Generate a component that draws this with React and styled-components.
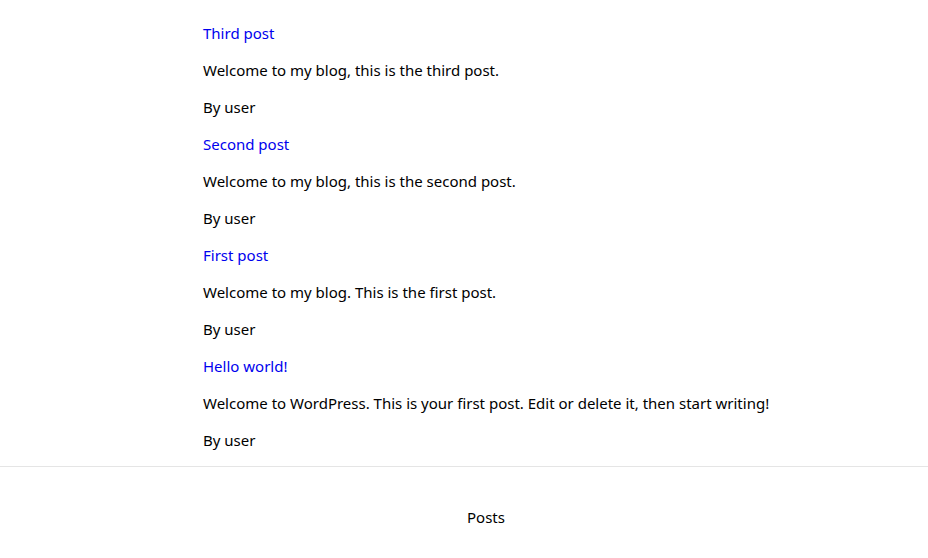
import React from "react";
import styled, { createGlobalStyle } from "styled-components";

const Global = createGlobalStyle`
  html, body { margin: 0; padding: 0; background: #fff; }
  body {
    font-family: "Noto Sans", "Open Sans", sans-serif;
    font-size: 15px;
    color: #000;
  }
`;

const Main = styled.main`
  padding: 7px 0 0 203px;
`;

const Post = styled.article``;

const Para = styled.p`
  margin: 16px 0;
  line-height: 21px;
  white-space: nowrap;
`;

const TitleLink = styled.a`
  color: #0000ee;
  text-decoration: none;
`;

const Footer = styled.footer`
  margin-top: -1px;
  border-top: 1px solid #e5e5e5;
  display: flex;
  justify-content: center;
  padding: 40px 0 0 44px;
`;

const FooterLink = styled.span`
  line-height: 21px;
`;

const posts = [
  { title: "Third post", body: "Welcome to my blog, this is the third post." },
  { title: "Second post", body: "Welcome to my blog, this is the second post." },
  { title: "First post", body: "Welcome to my blog. This is the first post." },
  {
    title: "Hello world!",
    body: "Welcome to WordPress. This is your first post. Edit or delete it, then start writing!",
  },
];

export default function App() {
  return (
    <>
      <Global />
      <Main>
        {posts.map((p) => (
          <Post key={p.title}>
            <Para>
              <TitleLink href="#">{p.title}</TitleLink>
            </Para>
            <Para>{p.body}</Para>
            <Para>By user</Para>
          </Post>
        ))}
      </Main>
      <Footer>
        <FooterLink>Posts</FooterLink>
      </Footer>
    </>
  );
}
